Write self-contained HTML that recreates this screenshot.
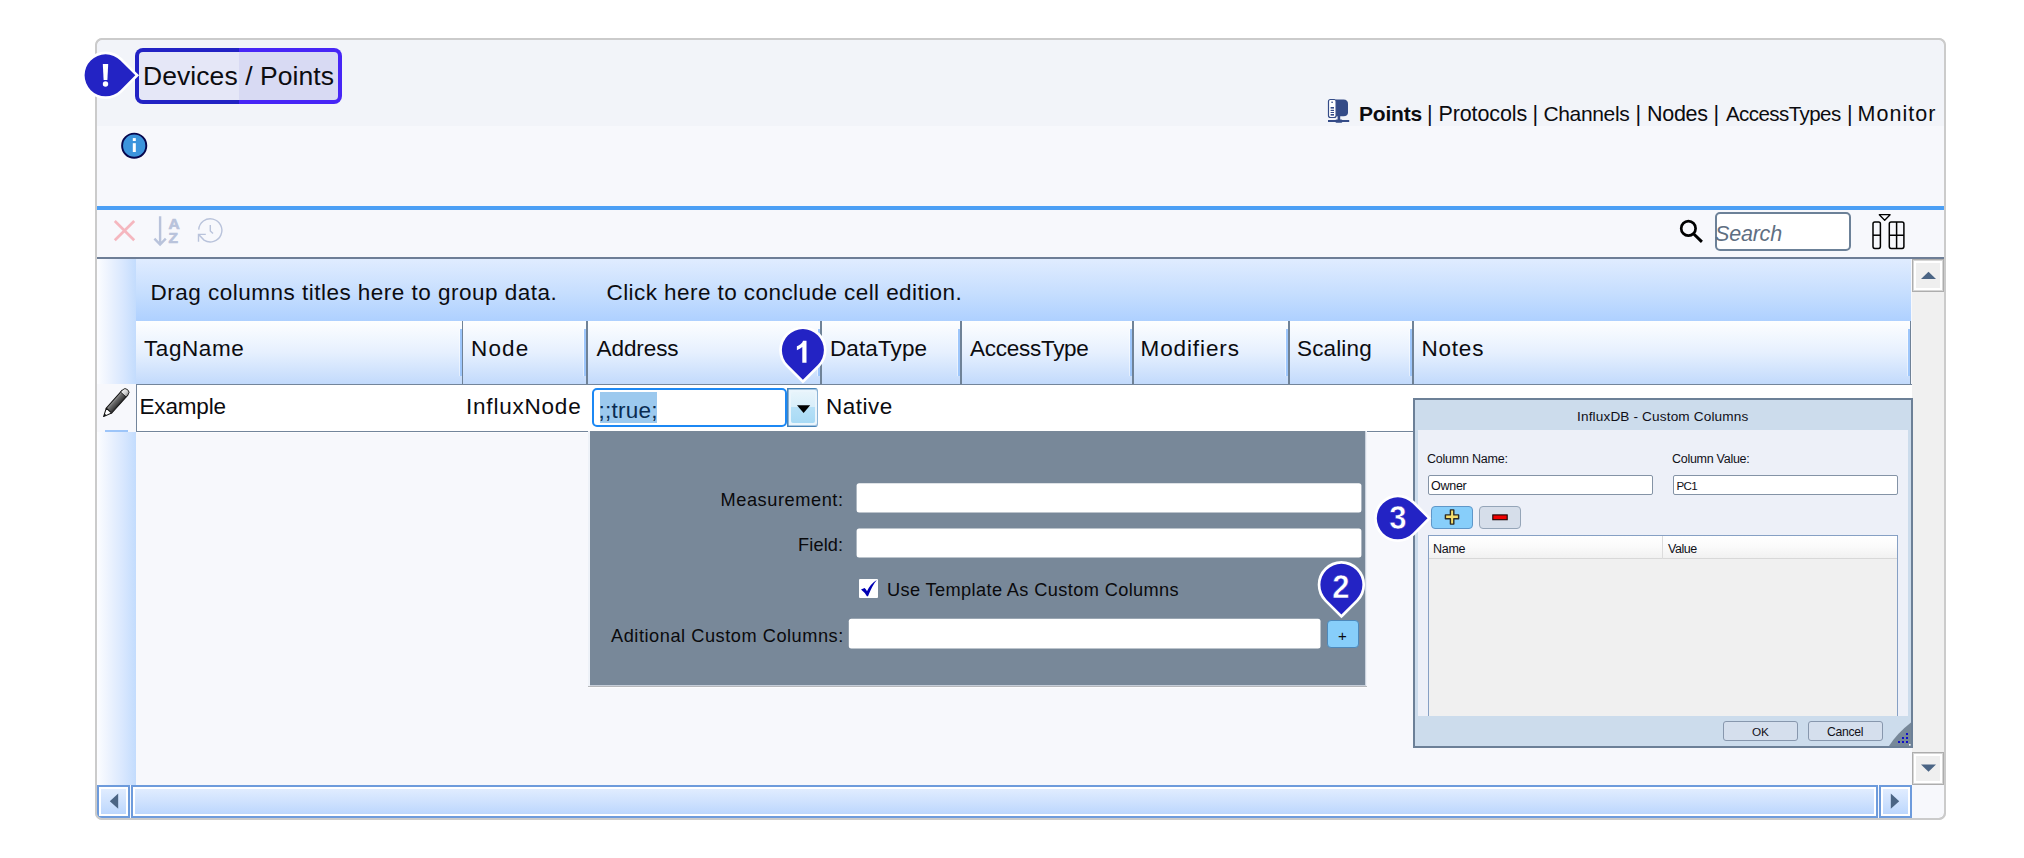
<!DOCTYPE html>
<html>
<head>
<meta charset="utf-8">
<title>Devices / Points</title>
<style>
*{box-sizing:border-box;margin:0;padding:0}
html,body{width:2024px;height:858px;background:#fff;overflow:hidden}
body{position:relative;font-family:"Liberation Sans",sans-serif;color:#000}
.a{position:absolute}
.t{position:absolute;white-space:nowrap;line-height:1;color:#0c0c10}
svg{position:absolute;overflow:visible}
#frame{left:95px;top:38px;width:1851px;height:782px;border:2px solid #cbcbcb;border-radius:7px;background:#f7f8fc}
#frametop{left:95px;top:38px;width:1851px;height:782px;border:2px solid #cbcbcb;border-radius:7px;box-shadow:0 0 0 5px #fff}
#hdrband{left:97px;top:40px;width:1847px;height:86px;background:#f2f4f9;border-radius:6px 6px 0 0}
#blueline{left:97px;top:206px;width:1847px;height:4px;background:#4b9ff5}
#grayline{left:97px;top:257px;width:1847px;height:2px;background:#6e7e96}
/* title highlight */
#hl{left:135px;top:48px;width:207px;height:56px;border-radius:8px;background:linear-gradient(to right,#2222c4 0,#2222c4 104px,#4725f6 104px)}
#hl i{position:absolute;left:4px;top:4px;right:4px;bottom:4px;border-radius:4px;background:linear-gradient(to right,#e5e7f7 0,#e5e7f7 100px,#d8daf3 100px)}
/* grid */
#rowind{left:97px;top:259px;width:39px;height:526px;background:linear-gradient(to right,#fcfdff 0,#ebf2fe 33%,#d8e7fe 68%,#c3dcfd 100%)}
#rowindcur{left:97px;top:384px;width:39px;height:48px;background:#f7f8fc}
#curline{left:105px;top:430px;width:23px;height:2px;background:#9dc5f9}
#group{left:136px;top:259px;width:1775px;height:62px;background:linear-gradient(to bottom,#e0ecff 0,#c6defe 55%,#aed0ff 100%)}
#head{left:136px;top:321px;width:1775px;height:63px;background:linear-gradient(to bottom,#fdfeff 0,#e6f0fe 50%,#c2dafc 100%)}
.div{position:absolute;top:321px;width:2px;height:63px;background:#6f8297}
.divh{position:absolute;top:329px;width:2px;height:47px;background:#9dc6fb;box-shadow:-1px 0 0 rgba(255,255,255,.45)}
#row{left:136px;top:384px;width:1776px;height:48px;background:#fff;border:1px solid #73859b;border-right:none}

/* toolbar */
#search{left:1715px;top:212px;width:136px;height:39px;border:2px solid #6c8198;border-radius:5px;background:#fff}
#searcht{font-style:italic;color:#5f6f82}
/* scrollbars */
#vsb{left:1912px;top:259px;width:32px;height:526px;background:#f0f0f0}
.vbtn{position:absolute;left:1912px;width:32px;height:33px;background:#efefef;border:1px solid #adadad;box-shadow:inset 0 0 0 1px rgba(173,173,173,.5),inset 0 0 0 3px #fff}
#hsb{left:97px;top:785px;width:1815px;height:33px;background:#f7f8fc}
.hpart{position:absolute;top:785px;height:33px;border:2px solid #6d9bdc;background:linear-gradient(to bottom,#e3eeff 0,#cfe2fe 50%,#b9d5fd 100%);box-shadow:inset 0 0 0 2px #fff}
#corner{left:1912px;top:785px;width:32px;height:33px;background:#f7f8fc}
/* address editor */
#addr{left:592px;top:388px;width:195px;height:39px;border:2px solid #1c88f4;border-radius:5px;background:#fff}
#sel{left:600px;top:392px;width:57px;height:31px;background:#9cc9ee}
#addrt{color:#0a2c52}
#ddbtn{left:787px;top:388px;width:31px;height:39px;border:1px solid #4683b8;border-right-color:#8db4d6;border-radius:0 3px 3px 0;background:#eaf5fc;box-shadow:inset 1px 0 0 rgba(61,122,179,.55),inset 0 1px 0 rgba(61,122,179,.4),inset 0 -1px 0 rgba(61,122,179,.4)}
#ddbtn i{position:absolute;left:3px;top:3px;right:2px;bottom:3px;border-radius:2px;background:linear-gradient(to bottom,#e7f4fb 0,#d8eefa 49%,#b6e0f7 50%,#a8daf5 100%)}
/* dropdown panel */
#panel{left:590px;top:431px;width:775px;height:254px;background:#788899}
.pe{position:absolute}
.pin{position:absolute;background:#fff;border-radius:2px}
.pl{color:#0a0a0c}
#chk{left:859px;top:579px;width:19px;height:19px;background:#fff;border-radius:1px}
#plus{left:1327px;top:620px;width:32px;height:28px;border:1px solid #4d88ba;border-radius:4px;background:#87cefa}

/* dialog */
#dlg{left:1413px;top:398px;width:500px;height:350px;border:2px solid #6c8097;background:#ccdcec}
#dlgbody{left:1418px;top:430px;width:490px;height:286px;background:#edf0f8}
.din{position:absolute;top:475px;width:225px;height:20px;border:1px solid #8493a6;border-radius:2px;background:#fff}
.dt{color:#101018}
#dplus{left:1431px;top:506px;width:42px;height:23px;border:1px solid #5f97c9;border-radius:4px;background:#87cefa}
#dminus{left:1479px;top:506px;width:42px;height:23px;border:1px solid #95a5b8;border-radius:4px;background:#d6deea}
#dtable{left:1428px;top:535px;width:470px;height:181px;border:1px solid #86a0c4;border-bottom:none;background:#f0f0f0}
#dthead{left:1429px;top:536px;width:468px;height:23px;background:linear-gradient(to bottom,#ffffff 0,#fbfbfb 45%,#f1f1f1 100%);border-bottom:1px solid #d8d8d8}
#dtdiv{left:1662px;top:536px;width:1px;height:23px;background:#dcdcdc}
.dbtn{position:absolute;top:721px;width:75px;height:20px;border:1px solid #8797ad;border-radius:3px;background:#d5dfed}
.mk{width:42px;text-align:center;font-weight:bold;color:#fff;transform:scaleX(.94);-webkit-text-stroke:0.5px #2323c4}
</style>
</head>
<body>
<div class="a" id="frame"></div>
<div class="a" id="hdrband"></div>
<div class="a" id="blueline"></div>
<div class="a" id="grayline"></div>

<!-- title -->
<div class="a" id="hl"><i></i></div>
<div class="t" id="title" style="left:143.0px;top:63px;font-size:26.5px;letter-spacing:0.07px">Devices / Points</div>
<div class="t" id="n1" style="left:1359.0px;top:103px;font-size:21px;font-weight:bold;letter-spacing:-0.2px">Points</div>
<div class="t" id="s1" style="left:1427.0px;top:104px;font-size:21.5px;letter-spacing:0.0px">|</div>
<div class="t" id="n2" style="left:1438.5px;top:104px;font-size:21.5px;letter-spacing:-0.12px">Protocols</div>
<div class="t" id="s2" style="left:1532.5px;top:104px;font-size:21.5px;letter-spacing:0.0px">|</div>
<div class="t" id="n3" style="left:1543.5px;top:103px;font-size:21px;letter-spacing:-0.36px">Channels</div>
<div class="t" id="s3" style="left:1635.5px;top:104px;font-size:21.5px;letter-spacing:0.0px">|</div>
<div class="t" id="n4" style="left:1647.0px;top:104px;font-size:21.5px;letter-spacing:-0.3px">Nodes</div>
<div class="t" id="s4" style="left:1713.5px;top:104px;font-size:21.5px;letter-spacing:0.0px">|</div>
<div class="t" id="n5" style="left:1726.0px;top:104px;font-size:20.5px;letter-spacing:-0.56px">AccessTypes</div>
<div class="t" id="s5" style="left:1847.0px;top:104px;font-size:21.5px;letter-spacing:0.0px">|</div>
<div class="t" id="n6" style="left:1857.5px;top:104px;font-size:21.5px;letter-spacing:1.03px">Monitor</div>

<!-- grid -->
<div class="a" id="rowind"></div>
<div class="a" id="group"></div>
<div class="t g" style="left:150.5px;top:282px;font-size:22.5px;letter-spacing:0.49px" id="g1">Drag columns titles here to group data.</div>
<div class="t g" style="left:606.5px;top:282px;font-size:22.5px;letter-spacing:0.43px" id="g2">Click here to conclude cell edition.</div>
<div class="a" id="head"></div>
<div class="div" style="left:462px;width:1px"></div><div class="divh" style="left:460px"></div>
<div class="div" style="left:586px;width:2px"></div><div class="divh" style="left:584px"></div>
<div class="div" style="left:820px;width:2px"></div><div class="divh" style="left:818px"></div>
<div class="div" style="left:960px;width:2px"></div><div class="divh" style="left:958px"></div>
<div class="div" style="left:1132px;width:2px"></div><div class="divh" style="left:1130px"></div>
<div class="div" style="left:1288px;width:2px"></div><div class="divh" style="left:1286px"></div>
<div class="div" style="left:1412px;width:2px"></div><div class="divh" style="left:1410px"></div>
<div class="div" style="left:1910px;width:1px"></div><div class="divh" style="left:1908px"></div>
<div class="t h" style="left:144.0px;top:338px;font-size:22.5px;letter-spacing:0.57px" id="h1">TagName</div>
<div class="t h" style="left:471.0px;top:338px;font-size:22.5px;letter-spacing:1.13px" id="h2">Node</div>
<div class="t h" style="left:596.5px;top:338px;font-size:22.5px;letter-spacing:-0.07px" id="h3">Address</div>
<div class="t h" style="left:830.0px;top:338px;font-size:22.5px;letter-spacing:0.11px" id="h4">DataType</div>
<div class="t h" style="left:970.0px;top:338px;font-size:22.5px;letter-spacing:-0.27px" id="h5">AccessType</div>
<div class="t h" style="left:1140.5px;top:338px;font-size:22.5px;letter-spacing:0.9px" id="h6">Modifiers</div>
<div class="t h" style="left:1297.0px;top:338px;font-size:22.5px;letter-spacing:0.15px" id="h7">Scaling</div>
<div class="t h" style="left:1421.5px;top:338px;font-size:22.5px;letter-spacing:0.78px" id="h8">Notes</div>
<div class="a" id="rowindcur"></div>
<div class="a" id="curline"></div>
<div class="a" style="left:137px;top:432px;width:1775px;height:1px;background:#fdfdfe"></div>
<div class="a" id="row"></div>
<div class="t c" style="left:139.5px;top:396px;font-size:22.5px;letter-spacing:-0.18px" id="c1">Example</div>
<div class="t c" style="left:466.0px;top:396px;font-size:22.5px;letter-spacing:0.79px" id="c2">InfluxNode</div>
<div class="t c" style="left:826.0px;top:396px;font-size:22.5px;letter-spacing:0.5px" id="c3">Native</div>

<!-- toolbar icons -->
<svg style="left:0;top:0" width="2024" height="858" viewBox="0 0 2024 858">
 <g stroke="#f5b7bf" stroke-width="2.7" fill="none"><path d="M114.8 221 L134.2 240.2 M134.2 221 L114.8 240.2"/></g>
 <g stroke="#b9c3db" stroke-width="2.4" fill="none"><path d="M160.1 216.2 V244 M154.4 238.6 L160.1 244.6 L165.8 238.6"/></g>
 <g stroke="#b9c3db" stroke-width="1.4" fill="none"><path d="M198.7 229.6 A11.6 11.6 0 1 1 204 240.1 L198.7 234.6 M205.8 234.4 H198.5 V241.8 M210.3 225 V231 L213 233.6"/></g>
 <g stroke="#000" fill="none"><circle cx="1688.4" cy="228.4" r="7.2" stroke-width="2.7"/><path d="M1693.8 234 L1701.9 241.9" stroke-width="3"/></g>
 <g stroke="#000" stroke-width="1.5" fill="none"><rect x="1873" y="222" width="7.4" height="26.4" rx="1.8"/><path d="M1873 235.2 H1880.4"/><rect x="1889.3" y="222" width="14.6" height="26.4" rx="1.8"/><path d="M1889.3 235.2 H1903.9 M1896.6 222 V248.4"/><path d="M1879.3 214.7 H1890.1 L1884.7 220.2 Z" stroke-width="1.3" stroke-linejoin="round"/></g>
</svg>
<div class="t" id="az" style="left:168.5px;top:216.5px;font-size:15.5px;font-weight:bold;color:#b9c3db;line-height:14px;-webkit-text-stroke:0.7px #b9c3db">A<br>Z</div>
<div class="a" id="search"></div>
<div class="t" id="searcht" style="left:1715.0px;top:224px;font-size:21.5px;letter-spacing:-0.2px">Search</div>

<!-- scrollbars -->
<div class="a" id="vsb"></div>
<div class="vbtn" style="top:259px"></div>
<div class="vbtn" style="top:752px"></div>
<div class="a" id="hsb"></div>
<div class="hpart" style="left:97px;width:33px"></div>
<div class="hpart" style="left:131px;width:1747px"></div>
<div class="hpart" style="left:1879px;width:33px"></div>
<svg style="left:0;top:0" width="2024" height="858" viewBox="0 0 2024 858">
 <g fill="#4b6585"><path d="M1921 279 L1936 279 L1928.5 271.8 Z"/><path d="M1921 764.6 L1936 764.6 L1928.5 771.8 Z"/><path d="M118.2 793.6 V808.8 L109.8 801.2 Z"/><path d="M1890.8 793.6 V808.8 L1899.2 801.2 Z"/></g>
</svg>

<!-- address editor -->
<div class="a" id="addr"></div>
<div class="a" id="sel"></div>
<div class="t" id="addrt" style="left:598.5px;top:400px;font-size:22.5px;letter-spacing:0.23px">;;true;</div>
<div class="a" id="ddbtn"><i></i></div>
<svg style="left:0;top:0" width="2024" height="858" viewBox="0 0 2024 858"><path d="M797 405.2 H810.2 L803.6 413 Z" fill="#000"/></svg>

<!-- dropdown panel -->
<div class="a" id="panel"></div>
<div class="pe" style="left:588px;top:431px;width:2px;height:255px;background:#eef2f8"></div>
<div class="pe" style="left:1365px;top:431px;width:1px;height:255px;background:#cbd3de"></div><div class="pe" style="left:1366px;top:431px;width:1px;height:255px;background:#eef1f7"></div>
<div class="pe" style="left:590px;top:685px;width:775px;height:1px;background:#c6ced9"></div>
<div class="pe" style="left:588px;top:686px;width:779px;height:1px;background:#b5b7bb"></div>
<div class="pe" style="left:588px;top:687px;width:779px;height:1px;background:#fcfcfe"></div>
<div class="t pl" style="left:720.5px;top:491px;font-size:18.2px;letter-spacing:0.57px" id="p1">Measurement:</div>

<div class="t pl" style="left:798.0px;top:536px;font-size:18.2px;letter-spacing:0.14px" id="p2">Field:</div>

<svg style="left:0;top:0" width="2024" height="858" viewBox="0 0 2024 858"><g fill="#fff"><rect x="856.6" y="483.3" width="504.8" height="29.2" rx="2.5"/><rect x="856.6" y="528.4" width="504.8" height="29.2" rx="2.5"/><rect x="848.8" y="618.8" width="471.7" height="29.6" rx="2.5"/></g></svg>
<div class="a" id="chk"></div>
<svg style="left:0;top:0" width="2024" height="858" viewBox="0 0 2024 858"><path d="M861 589.5 L864.6 588 Q866.2 589.2 867 591.2 Q870.5 583.8 876.8 580 Q872.5 585 868 596.2 L866.9 596.2 Q864.8 592.4 861 589.5 Z" fill="#0000b4"/></svg>
<div class="t pl" style="left:887.0px;top:581px;font-size:18.2px;letter-spacing:0.38px" id="p3">Use Template As Custom Columns</div>
<div class="t pl" style="left:611.0px;top:627px;font-size:18.2px;letter-spacing:0.54px" id="p4">Aditional Custom Columns:</div>

<div class="a" id="plus"></div>
<div class="t" style="left:1338px;top:628px;font-size:15px" id="pplus">+</div>

<!-- dialog -->
<div class="a" id="dlg"></div>
<div class="a" id="dlgbody"></div>
<div class="t" style="left:1577.0px;top:410px;font-size:13.6px;color:#101018;letter-spacing:0.15px" id="dtitle">InfluxDB - Custom Columns</div>
<div class="t dt" style="left:1427.0px;top:453px;font-size:12.5px;letter-spacing:-0.22px" id="dl1">Column Name:</div>
<div class="t dt" style="left:1672.0px;top:453px;font-size:12.5px;letter-spacing:-0.28px" id="dl2">Column Value:</div>
<div class="din" style="left:1428px"></div>
<div class="din" style="left:1673px"></div>
<div class="t dt" style="left:1431.0px;top:480px;font-size:12.5px;letter-spacing:-0.27px" id="dv1">Owner</div>
<div class="t dt" style="left:1676.5px;top:480px;font-size:11.6px;letter-spacing:-0.7px" id="dv2">PC1</div>
<div class="a" id="dplus"></div>
<div class="a" id="dminus"></div>
<svg style="left:0;top:0" width="2024" height="858" viewBox="0 0 2024 858">
 <path d="M1450.4 509.9 h3.4 v5 h4.8 v3.8 h-4.8 v5.4 h-3.4 v-5.4 h-5 v-3.8 h5 Z" fill="#f6df6e" stroke="#2e2a22" stroke-width="1.4" stroke-linejoin="round"/>
 <rect x="1492.8" y="514.9" width="14.4" height="4.8" fill="#f00000" stroke="#1c0404" stroke-width="1.1"/>
</svg>
<div class="a" id="dtable"></div>
<div class="a" id="dthead"></div>
<div class="a" id="dtdiv"></div>
<div class="t dt" style="left:1433.0px;top:543px;font-size:12.5px;letter-spacing:-0.3px" id="dh1">Name</div>
<div class="t dt" style="left:1668.0px;top:543px;font-size:12.5px;letter-spacing:-0.45px" id="dh2">Value</div>
<div class="dbtn" style="left:1723px"></div>
<div class="dbtn" style="left:1808px"></div>
<div class="t dt" style="left:1752.0px;top:727px;font-size:11.8px;letter-spacing:-0.2px" id="dok">OK</div>
<div class="t dt" style="left:1827.0px;top:726px;font-size:12.2px;letter-spacing:-0.32px" id="dcancel">Cancel</div>
<svg style="left:0;top:0" width="2024" height="858" viewBox="0 0 2024 858">
 <path d="M1889 746 Q1897.5 733 1911 722.6 V746 Z" fill="#778899"/><rect x="1909" y="744" width="1.6" height="1.6" fill="#f4f6fa"/>
 <g fill="#1010c8"><rect x="1906" y="733" width="2" height="2"/><rect x="1906" y="737" width="2" height="2"/><rect x="1906" y="741" width="2" height="2"/><rect x="1902" y="737" width="2" height="2"/><rect x="1902" y="741" width="2" height="2"/><rect x="1898" y="741" width="2" height="2"/></g>
</svg>

<div class="a" id="frametop"></div>
<!-- markers -->
<svg style="left:0;top:0" width="2024" height="858" viewBox="0 0 2024 858">
 <defs><path id="pin" d="M0 29.7 L14.85 14.85 A21 21 0 1 0 -14.85 14.85 Z"/></defs>
 <g fill="#2323c4" stroke="#fff" stroke-width="5.4" paint-order="stroke" stroke-linejoin="miter">
  <use href="#pin" transform="translate(105.6 75.3) rotate(-90)"/>
  <use href="#pin" transform="translate(802.9 350.1)"/>
  <use href="#pin" transform="translate(1341.4 584.8)"/>
  <use href="#pin" transform="translate(1397.8 518.3) rotate(-90)"/>
 </g>
 <g fill="#fff"><path d="M806.5 362.8 H802.3 V346.97 Q800 349.1 796.87 350.16 V346.34 Q798.5 345.8 800.45 344.3 Q802.37 342.8 803.1 340.8 H806.5 Z"/><path d="M102.8 64 h5.4 l-0.8 16 h-3.8 Z"/><circle cx="105.5" cy="84" r="2.7"/></g>
</svg>
<div class="t mk" style="left:1320.0px;top:570.0px;font-size:33px" id="m2">2</div>
<div class="t mk" style="left:1377.0px;top:501.0px;font-size:33px" id="m3">3</div>

<!-- small icons -->
<svg style="left:0;top:0" width="2024" height="858" viewBox="0 0 2024 858">
 <defs>
  <linearGradient id="pg" x1="0" y1="0" x2="1" y2="0"><stop offset="0" stop-color="#a4a4a4"/><stop offset="0.3" stop-color="#6a6a6a"/><stop offset="0.7" stop-color="#4a4a4a"/><stop offset="1" stop-color="#262626"/></linearGradient>
  <linearGradient id="pe" x1="0" y1="0" x2="1" y2="0"><stop offset="0" stop-color="#f4f4f4"/><stop offset="0.6" stop-color="#cfcfcf"/><stop offset="1" stop-color="#8a8a8a"/></linearGradient>
 </defs>
 <!-- info -->
 <circle cx="134.2" cy="145.7" r="12.1" fill="#3c94dc" stroke="#06064c" stroke-width="1.9"/>
 <rect x="132.8" y="138.1" width="3" height="2.9" fill="#fff"/><rect x="132.8" y="143.2" width="3" height="8.8" fill="#fff"/>
 <!-- computer -->
 <g>
  <path d="M1336 99.6 H1343.5 Q1348 99.8 1348 104 V112.5 Q1348 116 1343.5 116.2 H1336 Z" fill="#344b87"/>
  <rect x="1337.6" y="115" width="2.6" height="5.6" fill="#344b87"/>
  <rect x="1328" y="120" width="21.2" height="2" fill="#344b87"/>
  <rect x="1335.4" y="119.4" width="7" height="3.4" rx="1.2" fill="#344b87"/>
  <rect x="1328.5" y="99.5" width="7.6" height="18" rx="2" fill="#fff" stroke="#344b87" stroke-width="1.2"/>
  <rect x="1331.4" y="101.6" width="1.4" height="1.4" fill="#344b87"/>
  <rect x="1330.6" y="107" width="3.4" height="1.6" fill="#344b87"/><rect x="1330.6" y="109.8" width="3.4" height="1.2" fill="#344b87"/><rect x="1330.6" y="112" width="3.4" height="1" fill="#344b87"/><rect x="1330.6" y="114" width="3.4" height="1.6" fill="#344b87"/>
 </g>
 <!-- pencil -->
 <g transform="translate(103.6 416.6) rotate(41.8)">
  <rect x="-3.7" y="-32" width="7.4" height="24" fill="url(#pg)" stroke="#141414" stroke-width="1"/>
  <path d="M-3.7 -29.6 V-32.4 A3.7 3.7 0 0 1 3.7 -32.4 V-29.6 Z" fill="url(#pe)" stroke="#222" stroke-width="0.9"/>
  <path d="M-3.6 -8 L0 0 L3.6 -8 Z" fill="#fff" stroke="#141414" stroke-width="1" stroke-linejoin="round"/>
  <path d="M-1.4 -3 L0 0 L1.4 -3 Z" fill="#111"/>
 </g>
</svg>

</body>
</html>
